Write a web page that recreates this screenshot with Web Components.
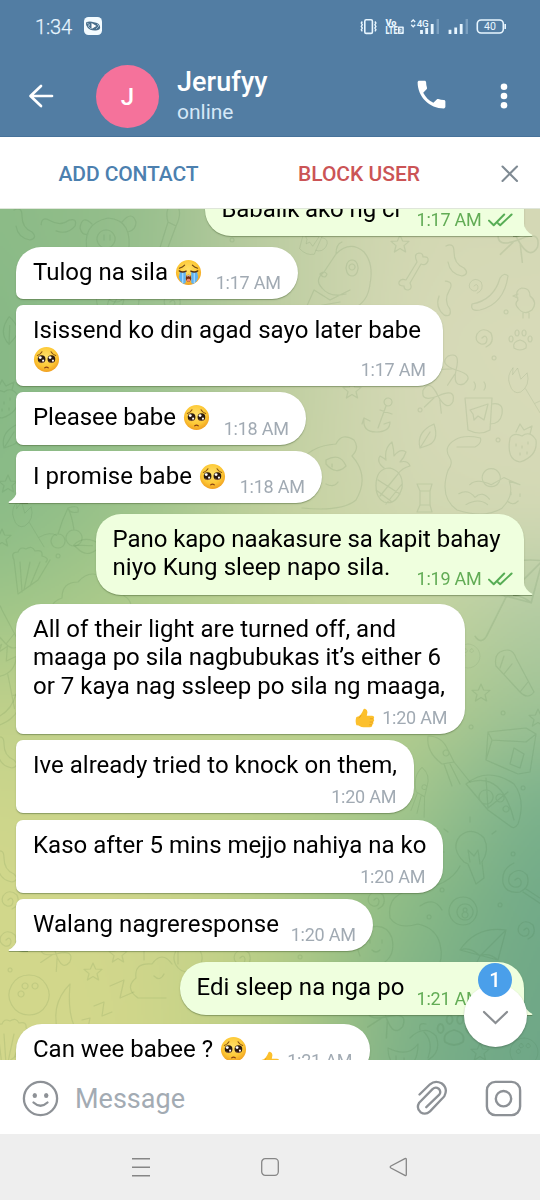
<!DOCTYPE html>
<html lang="en">
<head>
<meta charset="utf-8">
<title>Jerufyy</title>
<style>
html,body{margin:0;padding:0;width:540px;height:1200px;overflow:hidden;background:#fff;font-family:Roboto,"Liberation Sans",sans-serif}
</style>
</head>
<body>
<chat-app></chat-app>
<script>
const define=(name,html,init)=>{
  const t=document.createElement('template');t.innerHTML=html;
  customElements.define(name,class extends HTMLElement{
    constructor(){super();this.attachShadow({mode:'open'}).append(t.content.cloneNode(true))}
    connectedCallback(){if(init)init.call(this,this.shadowRoot)}
  });
};

/* One line of text whose letter spacing is tuned to a wanted advance width. */
define('text-line',`<style>:host{display:inline-block;white-space:pre;vertical-align:baseline}span{display:inline-block}</style><span><slot></slot></span>`,function(r){
  const w=+this.getAttribute('w');if(!w)return;
  const s=r.querySelector('span'),n=this.textContent.length;
  const ls=(w-s.getBoundingClientRect().width)/n;
  s.style.letterSpacing=ls.toFixed(3)+'px';
});

/* Emoji */
const EMOJI={
plead:`<circle cx="14" cy="14" r="13" fill="url(#g)"/><path d="M4.5 9.8Q8 8.6 9.3 6M23.5 9.8Q20 8.6 18.7 6" stroke="#8a5313" stroke-width="1.1" fill="none" stroke-linecap="round"/><circle cx="8.9" cy="13.6" r="4" fill="#2b1a10"/><circle cx="19.1" cy="13.6" r="4" fill="#2b1a10"/><circle cx="7.5" cy="12" r="1.5" fill="#fff"/><circle cx="17.7" cy="12" r="1.5" fill="#fff"/><circle cx="10.5" cy="15.2" r="1.1" fill="#fff"/><circle cx="20.7" cy="15.2" r="1.1" fill="#fff"/><path d="M6 16.4q2.6 1.7 5.6 0M16.2 16.4q2.6 1.7 5.6 0" stroke="#9a6a4a" stroke-width=".8" fill="none"/><path d="M12.2 22.6q1.8-1.4 3.6 0" stroke="#8a4313" stroke-width="1.2" fill="none" stroke-linecap="round"/>`,
cry:`<circle cx="14" cy="14" r="13" fill="url(#g)"/><path d="M4.5 9.5Q8 8.6 10 6.3M23.5 9.5Q20 8.6 18 6.3" stroke="#6f4513" stroke-width="1.1" fill="none" stroke-linecap="round"/><path d="M5 13.4h6.2v10.8q-.6 2-3 1.2Q4.6 23 4 19zM23 13.4h-6.2v10.8q.6 2 3 1.2Q23.4 23 24 19z" fill="#5fb2f2"/><path d="M8 14v11M20 14v11" stroke="#a5daff" stroke-width="1.3"/><path d="M4.4 12.3q3.2 2.1 7.2.3M23.6 12.3q-3.2 2.1-7.2.3" stroke="#5a3410" stroke-width="1.4" fill="none" stroke-linecap="round"/><ellipse cx="14" cy="20" rx="2.7" ry="3.6" fill="#7a2d0c"/><ellipse cx="14" cy="22" rx="1.9" ry="1.5" fill="#f0876a"/><path d="M12.3 17.7q1.7-.9 3.4 0" stroke="#fff" stroke-width="1" fill="none"/>`,
thumb:`<path d="M2 12.5q3.6-.3 6-3.5 2.6-3.6 3.8-7 .5-1.4 2.2-1Q17.6 2 17.4 6l-.9 5h7.6q3 0 2.7 2.6-.2 1-1 1.5 1.4 1.2.9 2.9-.4 1.2-1.5 1.6 1 1.3.3 2.7-.5 1-1.7 1.2.6 1 0 2.2-.7 1.3-3 1.3H12q-3 0-5.2-1.6Q5 24 2 24.2-.2 18 2 12.5z" fill="#fcc02d"/><path d="M25.6 15.1h-4.7M25.2 19.6h-4.6M23.8 23.5h-4M8.5 10q-1 3.400-3.400 4" stroke="#e39a1a" stroke-width="1" fill="none"/>`};
define('emo-ji',`<style>:host{display:inline-block;width:27px;height:27px}svg{display:block;width:100%;height:100%}</style><svg viewBox="0 0 28 28"><defs><radialGradient id="g" cx=".48" cy=".38" r=".65"><stop offset="0" stop-color="#ffe06a"/><stop offset=".6" stop-color="#fdc936"/><stop offset="1" stop-color="#ef9a1e"/></radialGradient></defs><g></g></svg>`,function(r){r.querySelector('g').innerHTML=EMOJI[this.getAttribute('name')]});

/* Message bubble */
define('chat-bubble',`<style>
:host{display:grid;position:relative;box-sizing:border-box;padding:11px 16px 0 17px;flex:none;background:#fff;color:#000;font-size:24px;line-height:28.5px;margin-left:16px;align-self:flex-start;box-shadow:0 1px 1.2px rgba(70,95,50,.5);border-radius:25px 26px 26px 25px}
:host([out]){align-self:flex-end;margin:0 16px 0 0;background:#efffde;padding-left:16.5px}
.body,.meta{grid-area:1/1}
.body{white-space:nowrap}
.meta{align-self:end;justify-self:end;display:flex;align-items:flex-end;font-size:18px;line-height:21px;color:#a1aab3;padding-bottom:6px;margin-right:1.3px;white-space:nowrap}
:host([out]) .meta{color:#62ac55;margin-right:-4.5px}
.ck,.tail{display:none}
:host([out]) .ck{display:block;margin:0 0 3px 6px}
:host([tail]) .tail{display:block;position:absolute;left:-8.5px;bottom:0;color:#fff;filter:drop-shadow(0 1px .6px rgba(70,95,50,.5))}
:host([out][tail]) .tail{left:auto;right:-8.5px;color:#efffde;transform:scaleX(-1)}
</style><div class="body"><slot></slot></div><div class="meta"><slot name="mark"></slot><text-line w="65"></text-line><svg class="ck" width="25" height="14" viewBox="0 0 25 14"><path d="M1 7.6l4.7 4.6L16.2 1.5M10.2 10.4l2 1.8L23.6 1.5" stroke="#57ad55" stroke-width="2" fill="none" stroke-linecap="round" stroke-linejoin="round"/></svg></div><svg class="tail" width="20" height="18" viewBox="0 0 20 18"><path d="M9 0V6Q8.2 12.8 .9 16.8Q0 18 1.5 18H20V0z" fill="currentColor"/></svg>`,function(r){
  const g=a=>this.getAttribute(a);
  this.style.width=(+g('w')+(this.hasAttribute('out')?0:.5))+'px';this.style.height=g('h')+'px';this.style.marginTop=g('gap')+'px';
  if(g('r'))this.style.borderRadius=g('r');
  const t=r.querySelector('text-line');
  const n=document.createElement('text-line');n.setAttribute('w','65');n.textContent=g('time');t.replaceWith(n);
});

/* Soft gradient mesh with line doodles above it */
const D={
 star:'M0-9L2.6-3 9-2.6 4 1.6 5.6 8 0 4.6-5.6 8-4 1.6-9-2.6-2.6-3z',
 bone:'M-8 12L3-6Q-1-14 5-15 9-15 9-11 15-12 14-7 12-2 7-4L-4 15Q-1 21-6 22-10 22-10 18-16 18-15 14-13 10-8 12z',
 dog:'M-22 18Q-30 10-20 2L-8-16Q6-30 20-18 30-6 26 14 24 32 10 38M-22 18Q-14 28 2 24M-8-16Q-8-26-2-28M-24 4q4-4 7 0q-2 6-7 0M8-10a6 8 0 1 0 .1 0M8-6a3 3 0 1 0 .1 0M-30 20l-8 18 34-6M-30 20l16 10 20-10',
 pig:'M-20 16Q-28-14 0-20 26-18 20 16M-16-14Q-26-24-28-10q2 8 8 6M14-16q10-12 14 0 0 8-8 10M-2-8a9 9 0 1 0 .1 0M-4-3v5M2-3v5M-30 24q-6 14 4 20M26 22q8 12-2 24',
 squig:'M-10-16Q-2-20-2-10-2 2 8 6 14 12 6 14-6 12-8 0',
 worm:'M-18 14Q4 10 10-12q4-6 8-2Q14 14-10 20-20 22-18 14z',
 spiral:'M0 0q4-4 5 1 0 6-6 5-7-3-4-10 6-8 14-1 4 10-5 14',
 chick:'M-8 0q-4-10 4-12 8 0 8 8 8 6 2 14-8 6-14-2-4-4 0-8zM-3 13v5M3 13v5M-8-6l-5 2 5 2',
 paw:'M-6 8q-2-6 6-8 8 2 6 8-6 4-12 0zM-9-4a2 3 0 1 0 .1 0M-3-10a2 3 0 1 0 .1 0M4-10a2 3 0 1 0 .1 0M10-4a2 3 0 1 0 .1 0',
 mug:'M-15-14H12L10 18q-10 6-22 0zM12-8q12-2 10 10-2 10-12 10M-10-2l18-6-4 16-6-4-4 4-1-6zM-6-22q3-4 0-8M4-22q3-4 0-8',
 berry:'M-12-6Q-16 16-2 18 16 12 14-4 8-14 0-8-8-12-12-6zM-6-12l4-8 4 6 8-4-2 8M-6 0v2M0 2v2M6-2v2M-2 9v2M5 8v2',
 anchor:'M4-16a4 4 0 1 0 .1 0M2-8L-6 14M-4-4l12 4M-20 4q-2 14 12 14 14 0 14-10l-6 2M-20 4l-2 6M-20 4l6 3',
 pine:'M-12 8q0-18 14-18 14 4 12 20-6 18-18 14-8-4-8-16zM-10 2l22 14M-12 12l16 12M10-4L-8 18M14 6L-2 26M-4-10q-8-6-4-12 4 2 6 4-2-12 6-18 2 8 2 14 6-8 12-4-2 6-6 10 8-2 10 4-8 2-12 8',
 bear:'M-50 10Q-40-22-6-24 0-36 12-28 18-20 10-12 28 8 14 32 0 44-40 40M-16-8q14-8 20 6-10 10-20-2zM-10-4v3M-22 10v10M-16 16q8 4 12-2',
 cat:'M-30-30h20q8-4 6-10-18-4-28 2-14 8-6 20 4 6-2 14-10 30 10 44 30 10 50-2 14-14 8-30L40 12 22 4 8 12q-16-8-24 0M8-6a10 10 0 1 0 .1 0M-28 22q10-6 18 4 8-8 16 2M-20 34q14-8 24 0M30 20v3M40 22v3M26 30q6 6 12 0',
 cherry:'M-10 12a7 7 0 1 0 .1 0M6 8a8 8 0 1 0 .1 0M-10 12Q-6-2 0-14 4-6 6 8M0-14q12-4 10 4-8 2-10-4',
 corn:'M-16-12L-12 22 8 8 20-12M-16-12q-4-8 4-8 2-6 8-3 6-4 9 2 8-2 7 5 8 2 4 6M-10-10l2 30M0-10L-6 18M10-10L0 14',
 tree:'M-36 30Q-46 8-28 2-28-14-12-14 2-30 18-14 34-14 34 0 46 6 38 24M-16 10v10M12 12v8',
 tulip:'M-14-20q-8 10-4 20 4 14 14 10 12-8 8-24l-8 8-4-14-6 8zM2 6l18 30M14 24q14-8 22-2',
 carrot:'M-16-20q12-6 16 6L18 20q-6 8-14 0L-20-6q-2-10 4-14zM-12-16l-4 12M-4-8l-8 10M12 10l-8 10',
 squid:'M-20-20q14 0 20 14l6 12-12 2Q-22-4-20-20zM-4 8l8 22M2 8l10 20M6 6l16 20M-2-6a3 3 0 1 0 .1 0',
 chips:'M-22-16L16-20 26-14 20 24 8 26-24 12zM-22-16l4 8 34 2 10-8M4 0l10 6-4 14-10-4zM-24 12l6-20',
 pizza:'M-26-12Q-4-30 22-12 34 4 26 28 22 34 18 30L-4 14-26-12zM-22-14Q10-24 22 24M-6-6a7 7 0 1 0 .1 0M8-2a4 4 0 1 0 .1 0M14 10a3 3 0 1 0 .1 0M-6-18L-4 12 16-4',
 bulb:'M-6 10Q-20-4-10-16 2-26 14-14 20-2 12 10l2 16-8 6-8-20zM0 10L-2-2 4 4l4-6 2 14M-22-20l-4-3M0-30v-5M-26 0l-5 0M22-18l4-3',
 lolly:'M0 0q4-4 6 1 1 7-7 6-8-3-4-12 9-9 17 0 4 12-7 17-14 2-17-9-2-14 11-20M11 9L34 24M8 12l24 16',
 umb:'M-30-8Q-14-32 16-28L8 2Q-2-6-10-2-20-12-30-8zM-30-8L8 2M-10-2L-24 26q-4 6-8 0M16-28L-10-2',
 ball:'M0-20a20 20 0 1 0 .1 0M-4-12a3 3 0 1 0 .1 0M6-12a3 3 0 1 0 .1 0M-8-4a3 3 0 1 0 .1 0',
 eye:'M0-14a14 14 0 1 0 .1 0M2-7a8 8 0 1 0 .1 0M2-3a2 2 0 1 0 .1 0M2 1a3 3 0 1 0 .1 0',
 zzz:'M-22 20l8-2-2 10 8-2M-10 6l10-4-2 14 10-4M6-14l14-6-4 18 14-6',
 moon:'M4-30Q-18-8-6 24 6 36 20 26 0 14 4-30z',
 cloud:'M-20 18Q-34 8-22-2-24-18-6-16 4-30 14-16M-20 18H8M-14-40v20M20-46v30M-4-4q6 6 10-2M30-36a14 14 0 1 0 .1 0',
 blob:'M-40-8Q-44-34-14-36 20-40 30-60M-40-8q8 12 28 6 18 4 22 20 4 16-4 26M-10-20q14-10 22 4',
 pump:'M-28 4Q-8 14 2 0 2 24-16 24-28 20-28 4zM-6-6Q8-20 20-8 26 8 12 16M4-14q-2-8 6-6M8-12q10 10 4 26M-20 12v4M-12 14v4',
 bow:'M0 0Q-14-14-16 0-14 12 0 0 14-14 16 0 14 12 0 0M-3 3l-6 12M3 3l6 12',
 candy:'M-5-7h10v14h-10zM-5-7l-3-7h15l-2 7M-5 7l-3 7h15l-2-7',
 leaf:'M-8 12Q-12-4 6-12 12 6-2 10zM-8 12L2-4',
 brush:'M-4 26L6-6 14-2 2 30zM6-6q-4-14 6-20 10 8 2 24M-14 30q4-10 10-8',
 dot:'M0-2a2 2 0 1 0 .1 0', dog2:'M-16 10Q-24-8-8-18 10-24 16-8 20 10 6 18M-6-6v3M6-6v3M-4 4q4 4 8 0'
};
const P=[['pig',108,238],['brush',162,228],['squig',24,226],['squig',60,224,-60],['leaf',10,330,-30],['leaf',116,301],['pig',118,292],['spiral',170,302],['dot',232,240],['mug',312,240,20,.7],['star',400,244],['dog',344,270],['bone',414,268],['squig',456,262],['worm',490,290],['bow',518,240,20,1.3],['chick',526,300],['spiral',474,286,0,.8],['squig',446,300,30],['dot',506,312],['spiral',482,338],['paw',520,340],['bow',456,370,60],['dot',494,358],['tulip',524,384,0,.8],['star',352,390],['bow',438,396,20],['anchor',384,414],['mug',480,412],['berry',522,444],['leaf',428,436],['dot',420,410],['pine',388,478],['bear',342,468],['cat',484,474,0,.9],['candy',425,498],['dot',498,440],['star',8,484],['berry',4,400],['leaf',12,436],['tulip',28,518,0,.8],['cherry',68,522],['star',2,538],['dot',58,556],['corn',30,572],['tree',90,596],['leaf',88,546,60],['carrot',2,624],['tulip',8,668,20],['worm',6,706],['squig',6,754],['umb',520,600,0,1.4],['ball',468,656,0,.6],['carrot',516,672],['star',481,693],['dot',503,713],['star',538,718],['dot',471,727],['chips',510,748],['squid',448,756],['squid',424,790,40,.8],['pizza',492,796],['dot',523,788],['bulb',470,852],['dot',513,854],['lolly',515,880],['dot',442,890],['squig',6,868],['spiral',8,900],['spiral',6,940],['star',93,972],['ball',29,995],['zzz',104,1000],['moon',66,1014],['cloud',158,980],['bow',56,954,30],['star',118,954],['dot',10,970],['spiral',374,900],['eye',463,911],['dot',500,905],['dot',429,917],['spiral',524,930],['blob',430,926],['dog2',376,946],['umb',490,958],['bow',386,1017,30,1.2],['pump',416,1044],['paw',454,1030,0,1.5],['star',480,1052],['ball',524,1052,0,.7],['corn',14,1044],['spiral',240,958],['dot',300,957]];
/* rows at the given y, columns at x = 0,135,270,405,540 */
const MESH=[[209,'8cbb87 98bf8d bccda2 d1d7b1 d4d8b5'],[350,'88b986 9ac18f bccda0 d3d8b4 d7dab8'],[500,'8cbc87 9fc48c c0d09e d0d7b0 d2d8b4'],[600,'9fc588 aecb8c bdd193 c4d49f b7cda4'],[700,'bccf8a bfd18c bdd18e b5cd90 a0c396'],[800,'cbd58b c6d38b bbd08b a2c58c 7fb38c'],[900,'d1d78b cdd58b b6cd88 8dbb86 73ab88'],[1060,'d2d78b cfd68a b5cb86 80b287 6fa787']]
 .map(([y,s])=>[y,s.split(' ').map(h=>[0,2,4].map(i=>parseInt(h.substr(i,2),16)))]);
define('chat-wallpaper',`<style>:host{display:block;position:absolute;inset:0;overflow:hidden}canvas{display:block;width:540px;height:851px}svg{position:absolute;left:0;top:0}</style><canvas width="270" height="426"></canvas><svg width="540" height="851" viewBox="0 209 540 851"><g fill="none" stroke="#315c32" stroke-opacity=".105" stroke-width="1.2" stroke-linejoin="round" stroke-linecap="round"></g></svg>`,function(r){
  const c=r.querySelector('canvas'),W=c.width,H=c.height,x=c.getContext('2d'),im=x.createImageData(W,H);
  /* Catmull-Rom through four values keeps the blend free of creases */
  const cr=(a,b,c,d,t)=>b+.5*t*(c-a+t*(2*a-5*b+4*c-d+t*(3*(b-c)+d-a)));
  const M=(i,j,k)=>MESH[Math.max(0,Math.min(7,j))][1][Math.max(0,Math.min(4,i))][k];
  for(let j=0;j<H;j++){
    const y=209+j/H*851;let b=0;while(b<6&&MESH[b+1][0]<=y)b++;
    const v=(y-MESH[b][0])/(MESH[b+1][0]-MESH[b][0]);
    for(let i=0;i<W;i++){
      const u=i/W*4,a=Math.floor(u),f=u-a,o=(j*W+i)*4;
      for(let k=0;k<3;k++){
        const q=[-1,0,1,2].map(n=>cr(M(a-1,b+n,k),M(a,b+n,k),M(a+1,b+n,k),M(a+2,b+n,k),f));
        im.data[o+k]=cr(q[0],q[1],q[2],q[3],v);
      }
      im.data[o+3]=255;
    }
  }
  x.putImageData(im,0,0);
  r.querySelector('g').innerHTML=P.map(([n,a,b,rot=0,s=1])=>`<path d="${D[n]}" transform="translate(${a} ${b}) rotate(${rot}) scale(${s})"/>`).join('');
});

define('status-bar',`<style>:host{display:flex;height:53px;box-sizing:border-box;padding:15px 30px 0 35px;color:#e8f6ff;font-size:20px;line-height:24px;letter-spacing:0}
.t{font-weight:300;-webkit-text-stroke:.25px}.app{margin:2px 0 0 12px}svg{display:block;overflow:visible}</style>
<text-line class="t" w="37">1:34</text-line>
<svg class="app" width="18" height="18" viewBox="0 0 18 18"><rect width="18" height="18" rx="4.5" fill="#f3fbff"/><path d="M2 5.5Q5 3.5 10 5.2q5 .5 6 4Q17 13 12 13.5 6 14 3.5 10.5 1.5 8 2 5.5z" fill="#4a6f8c"/><path d="M7.5 6l5 3-5 3z" fill="#fff"/><path d="M3 6l3 2-2 1 3 3M13 7l2 2-3 3" stroke="#b9d4e6" fill="none" stroke-width=".7"/></svg>
<svg width="150" height="24" viewBox="360 15 150 24" style="margin-left:auto" fill="none" stroke="#e8f6ff">
<rect x="364.8" y="19.8" width="7.6" height="13.6" rx="1.4" stroke-width="1.6"/><path d="M362.3 21.5l-1 1.5 1 1.7-1 1.7 1 1.7-1 1.7 1 1.5M374.9 21.5l1 1.500-1 1.700 1 1.700-1 1.700 1 1.700-1 1.500" stroke-width="1.400"/>
<g fill="#e8f6ff" stroke="none" font-family="Roboto,sans-serif" font-weight="900"><text x="385.500" y="25.600" font-size="9" textLength="11" lengthAdjust="spacingAndGlyphs">Vo</text><text x="385.500" y="34" font-size="10" textLength="12" lengthAdjust="spacingAndGlyphs">LTE</text><rect x="398" y="26.600" width="5.800" height="7.400" rx=".8"/></g><path d="M399.500 28.400h2.400v3.600h-2.600M399.700 30.200h2" stroke="#527da3" stroke-width=".9"/>
<path d="M411.200 22l2-2 2 2M411.200 24.800l2 2 2-2" stroke-width="1.300"/><text x="416.800" y="27" font-size="9.800" font-weight="500" font-family="Roboto,sans-serif" fill="#e8f6ff" stroke="none" textLength="12">4G</text>
<path d="M421.500 30v4M426.700 28v6M432.200 24v10M450 29.800v4.200M455.700 27.500v6.500M461.200 24v10" stroke-width="2.800"/><path d="M437.800 19v15M466.800 19v15" stroke="#7a9fbf" stroke-width="2.400"/>
<rect x="477.300" y="20" width="26" height="13" rx="3.800" stroke-width="1.600"/><path d="M505.200 24v5" stroke-width="1.600"/><text x="484" y="30.200" font-size="10.600" font-family="Roboto,sans-serif" fill="#e8f6ff" stroke="none" textLength="12">40</text></svg>`);

define('chat-header',`<style>:host{display:flex;height:84px;box-sizing:border-box;padding:12px 0 0 28px;border-bottom:1px solid #47729a;color:#fff}
svg{display:block;flex:none}.back{margin-top:18.5px}.av{flex:none;width:63px;height:63px;border-radius:50%;background:#f5729b;margin:-.5px 0 0 42px;font-size:24px;font-weight:500;line-height:64px;text-align:center}
.n{margin-left:18px;width:236px;flex:none}.n div{font-weight:500;font-size:27px;line-height:32px;margin-top:1px}.n p{margin:1px 0 0;font-size:21px;line-height:27px;color:#d5e8f7}
.call{margin:11px 0 0}.dots{margin:17.5px 0 0 49px}</style>
<svg class="back" width="26" height="24" viewBox="0 0 26 24"><path d="M24 12H3M13 2L2.500 12 13 22" stroke="#fff" stroke-width="2.700" fill="none" stroke-linecap="round" stroke-linejoin="round"/></svg>
<div class="av">J</div><div class="n"><div><text-line w="90.500">Jerufyy</text-line></div><p><text-line w="56.500">online</text-line></p></div>
<svg class="call" width="37" height="37" viewBox="0 0 24 24"><path fill="#fff" d="M6.620 10.790c1.440 2.830 3.760 5.140 6.590 6.590l2.200-2.200c.27-.27.67-.36 1.020-.24 1.120.37 2.330.57 3.570.57.55 0 1 .45 1 1V20c0 .55-.45 1-1 1C10.610 21 3 13.390 3 4c0-.55.45-1 1-1h3.500c.55 0 1 .45 1 1 0 1.250.2 2.450.57 3.570.11.35.03.74-.25 1.020z"/></svg>
<svg class="dots" width="10" height="26" viewBox="0 0 10 26" fill="#fff"><circle cx="5" cy="3.800" r="3.300"/><circle cx="5" cy="13" r="3.300"/><circle cx="5" cy="22.200" r="3.300"/></svg>`);

define('contact-bar',`<style>:host{display:flex;height:72px;box-sizing:border-box;background:#fff;padding:24px 0 0 58.5px;font-weight:500;font-size:21px;line-height:27px;position:relative;border-bottom:1px solid #dfe6da}
.a{color:#4c80af}.b{color:#cb5456;margin-left:99.5px}svg{margin:4px 0 0 81.5px}</style><text-line class="a" w="140">ADD CONTACT</text-line><text-line class="b" w="122">BLOCK USER</text-line><svg width="18" height="18" viewBox="0 0 18 18"><path d="M1.500 1.500l14.500 14.500M16 1.500L1.500 16" stroke="#7f8a93" stroke-width="2.100" stroke-linecap="round"/></svg>`);

define('scroll-down',`<style>:host{display:block;position:absolute;left:463.500px;top:775px;width:63px;height:63px;border-radius:50%;background:#fff;box-shadow:0 1px 2px rgba(0,0,0,.25)}
b{position:absolute;left:14.500px;top:-21.500px;width:34px;height:34px;border-radius:50%;background:#4a9fea;color:#fff;font-weight:500;font-size:20px;line-height:35px;text-align:center}svg{position:absolute;left:18px;top:25.500px}</style><svg width="27" height="16" viewBox="0 0 27 16"><path d="M2 2l11.500 11L25 2" fill="none" stroke="#8a8e92" stroke-width="2.300" stroke-linecap="round"/></svg><b>1</b>`);

define('message-list',`<style>:host{display:flex;flex-direction:column;position:relative;height:851px;overflow:hidden}emo-ji{margin:-8px 0 0 6.500px;vertical-align:-6px}.f{margin-left:0}.th{width:20px;height:20px;margin:0 7px 0 0;vertical-align:0}</style>
<chat-wallpaper></chat-wallpaper>
<chat-bubble out tail w="319" h="52.500" gap="-25.500" time="1:17 AM" r="26px 26px 8px 26px"><text-line w="181">Babalik ako ng cr</text-line></chat-bubble>
<chat-bubble w="281.500" h="52" gap="11" time="1:17 AM" r="25px 26px 26px 7px"><text-line w="135">Tulog na sila</text-line><emo-ji name="cry"></emo-ji></chat-bubble>
<chat-bubble w="426.500" h="81" gap="6" time="1:17 AM" r="7px 25px 25px 7px"><text-line w="388">Isissend ko din agad sayo later babe</text-line><br><emo-ji class="f" name="plead"></emo-ji></chat-bubble>
<chat-bubble w="289.500" h="52.500" gap="6" time="1:18 AM" r="7px 26px 26px 7px"><text-line w="143">Pleasee babe</text-line><emo-ji name="plead"></emo-ji></chat-bubble>
<chat-bubble tail w="305.500" h="52.500" gap="6" time="1:18 AM" r="7px 26px 26px 7px"><text-line w="159">I promise babe</text-line><emo-ji name="plead"></emo-ji></chat-bubble>
<chat-bubble out tail w="428" h="81" gap="10.500" time="1:19 AM" r="25px 25px 8px 25px"><text-line w="388">Pano kapo naakasure sa kapit bahay</text-line><br><text-line w="278">niyo Kung sleep napo sila.</text-line></chat-bubble>
<chat-bubble w="448" h="130" gap="9" time="1:20 AM" r="25px 25px 25px 7px"><text-line w="363">All of their light are turned off, and</text-line><br><text-line w="408">maaga po sila nagbubukas it’s either 6</text-line><br><text-line w="412">or 7 kaya nag ssleep po sila ng maaga,</text-line><emo-ji slot="mark" class="th" name="thumb"></emo-ji></chat-bubble>
<chat-bubble w="397" h="73.500" gap="6" time="1:20 AM" r="7px 25px 25px 7px"><text-line w="364">Ive already tried to knock on them,</text-line></chat-bubble>
<chat-bubble w="426" h="73" gap="6.500" time="1:20 AM" r="7px 25px 25px 7px"><text-line w="393.500">Kaso after 5 mins mejjo nahiya na ko</text-line></chat-bubble>
<chat-bubble tail w="356.500" h="52.500" gap="6" time="1:20 AM" r="7px 26px 26px 7px"><text-line w="246">Walang nagreresponse</text-line></chat-bubble>
<chat-bubble out tail w="344" h="53" gap="10.500" time="1:21 AM" r="26px 26px 8px 26px"><text-line w="208">Edi sleep na nga po</text-line></chat-bubble>
<chat-bubble w="353" h="53" gap="9" time="1:21 AM" r="26px 26px 26px 7px"><text-line w="180">Can wee babee ?</text-line><emo-ji name="plead"></emo-ji><emo-ji slot="mark" class="th" name="thumb"></emo-ji></chat-bubble>
<scroll-down></scroll-down>`);

define('message-input',`<style>:host{display:flex;height:74px;background:#fff;align-items:center;box-sizing:border-box;padding:2.500px 18px 0 22px;font-size:27px;color:#a3abb3}
svg{display:block;flex:none}text-line{margin:2px 0 0 16px}.clip{margin-left:auto}.cam{margin-left:37px}</style>
<svg width="37" height="37" viewBox="0 0 37 37" fill="none" stroke="#8d9196" stroke-width="2.300"><circle cx="18.500" cy="18.500" r="16.600"/><path d="M11.500 22.500q7 6.500 14 0" stroke-linecap="round"/><ellipse cx="12.800" cy="15.500" rx="2.200" ry="2.500" fill="#8d9196" stroke="none"/><ellipse cx="24.200" cy="15.500" rx="2.200" ry="2.500" fill="#8d9196" stroke="none"/></svg>
<text-line w="110">Message</text-line>
<svg class="clip" width="32" height="37" viewBox="416 1080 32 37" fill="none" stroke="#8d9196" stroke-width="2.300" stroke-linecap="round" stroke-linejoin="round"><path d="M419.500 1094.500l10.500-10.200Q435 1080 441.500 1083.200q6.800 5 3 12.600-1 1.500-2.500 3l-12 12.600q-4.500 4-9.500.8-4.500-4-1.300-9.500l13.300-13.600q3-2.600 6.200-.4 2.800 2.700.6 6l-13 12.500"/></svg>
<svg class="cam" width="37" height="37" viewBox="0 0 37 37" fill="none" stroke="#8d9196" stroke-width="2.400"><rect x="1.900" y="1.900" width="33.200" height="33.200" rx="8.500"/><circle cx="18.500" cy="18.700" r="7.700"/></svg>`);

define('nav-bar',`<style>:host{display:flex;height:66px;background:#eee;justify-content:center;gap:109px;align-items:center}svg{display:block}</style>
<svg width="20" height="20" viewBox="0 0 20 20"><path d="M1 1.700h18M1 10.300h18M1 18.700h18" stroke="#868686" stroke-width="1.500"/></svg>
<svg width="20" height="20" viewBox="0 0 20 20"><rect x="1.700" y="1.700" width="16.600" height="16.600" rx="3.500" fill="none" stroke="#868686" stroke-width="1.300"/></svg>
<svg width="20" height="20" viewBox="0 0 20 20"><path d="M17.300 2.600v14.800q0 1.600-1.400.9L1.900 11q-1.400-1 0-2L15.900 1.700q1.400-.7 1.400.9z" fill="none" stroke="#868686" stroke-width="1.300"/></svg>`);

define('chat-app',`<style>:host{display:flex;flex-direction:column;width:540px;height:1200px}.top{background:#527da3}</style>
<div class="top"><status-bar></status-bar><chat-header></chat-header></div><contact-bar></contact-bar><message-list></message-list><message-input></message-input><nav-bar></nav-bar>`);
</script>
</body>
</html>
